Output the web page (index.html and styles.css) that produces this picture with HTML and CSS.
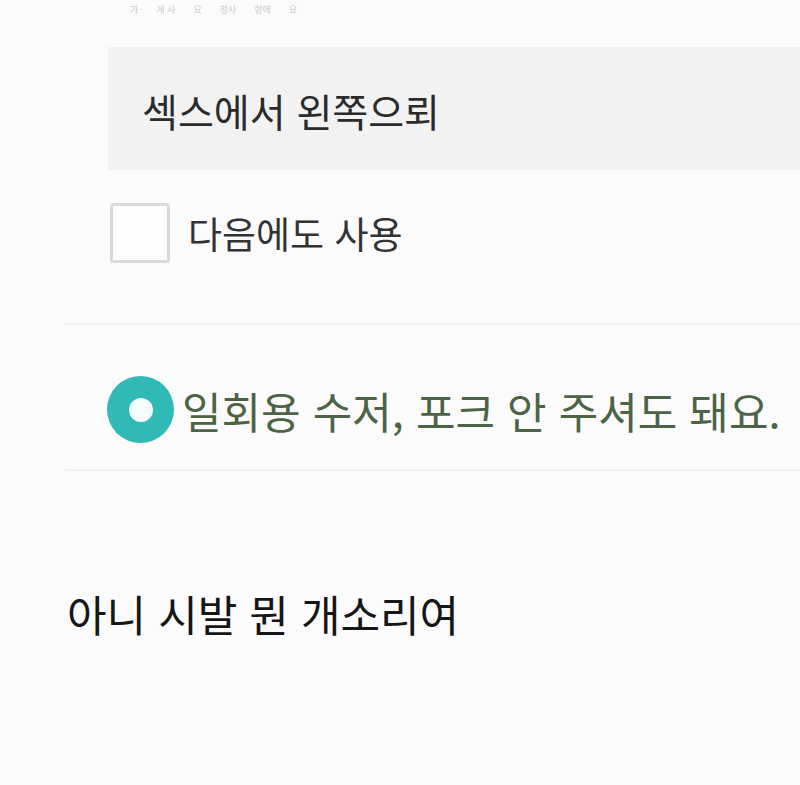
FILE: index.html
```html
<!DOCTYPE html>
<html lang="ko">
<head>
<meta charset="utf-8">
<title>요청사항</title>
<link rel="stylesheet" href="styles.css">
</head>
<body>
<div class="page">
  <div class="top-hint"><span>가</span><span>게 사</span><span>요</span><span>청사</span><span>항에</span><span>요</span></div>
  <div class="request-box">
    <span class="request-text">섹스에서 왼쪽으뢰</span>
  </div>
  <label class="check-row">
    <span class="checkbox"></span>
    <span class="check-label">다음에도 사용</span>
  </label>
  <div class="divider divider-first"></div>
  <div class="radio-row">
    <span class="radio"><span class="radio-dot"></span></span>
    <span class="radio-label">일회용 수저, 포크 안 주셔도 돼요.</span>
  </div>
  <div class="divider divider-second"></div>
  <p class="comment">아니 시발 뭔 개소리여</p>
</div>
</body>
</html>
```

FILE: styles.css
```css
html, body {
  margin: 0;
  padding: 0;
  background: #fbfbfb;
}

.page {
  width: 800px;
  height: 785px;
  overflow: hidden;
  font-family: "Noto Sans CJK KR", "Noto Sans", sans-serif;
}

.top-hint {
  height: 18px;
  padding: 3px 0 0 130px;
  box-sizing: border-box;
  display: flex;
  gap: 18px;
  width: 340px;
  font-size: 9px;
  line-height: 14px;
  color: #c9c9c9;
  white-space: nowrap;
}

.request-box {
  margin-top: 29px;
  margin-left: 108px;
  height: 123px;
  background: #f2f2f2;
  display: flex;
  align-items: center;
  padding-left: 34px;
}

.request-text {
  font-size: 39px;
  color: #2b2b2b;
  margin-top: 2px;
}

.check-row {
  display: flex;
  align-items: center;
  gap: 18px;
  margin-top: 33px;
  margin-left: 110px;
}

.checkbox {
  box-sizing: border-box;
  width: 60px;
  height: 60px;
  border: 3px solid #d9d9d9;
  border-radius: 4px;
  background: #fdfdfd;
}

.check-label {
  font-size: 37px;
  color: #333333;
}

.divider {
  height: 2px;
  background: #efefef;
  margin-left: 65px;
}

.divider-first {
  margin-top: 60px;
}

.radio-row {
  display: flex;
  align-items: center;
  gap: 8px;
  margin-top: 51px;
  margin-left: 107px;
}

.radio {
  width: 67px;
  height: 67px;
  border-radius: 50%;
  background: #2fbab7;
  display: flex;
  align-items: center;
  justify-content: center;
  flex: none;
}

.radio-dot {
  width: 24px;
  height: 24px;
  border-radius: 50%;
  background: #f4fbfb;
}

.radio-label {
  font-size: 43px;
  color: #4c6445;
  white-space: nowrap;
}

.divider-second {
  margin-top: 26px;
}

.comment {
  margin: 117px 0 0 67px;
  font-size: 43px;
  line-height: 1.2;
  color: #161616;
}
```
